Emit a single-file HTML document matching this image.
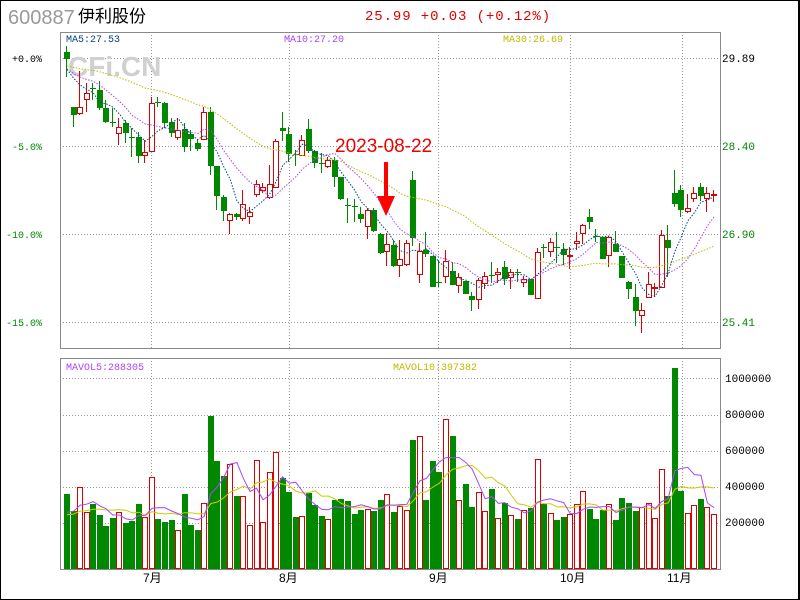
<!DOCTYPE html>
<html><head><meta charset="utf-8"><style>
html,body{margin:0;padding:0;background:#fff}
#w{position:relative;width:800px;height:600px;overflow:hidden;box-sizing:border-box;border:1px solid #000;border-width:1px 2px 1px 1px}
svg{position:absolute;left:-1px;top:-1px}
text{font-family:"Liberation Mono","DejaVu Sans Mono",monospace}
</style></head><body><div id="w"><svg id="s" width="800" height="600" xmlns="http://www.w3.org/2000/svg"></svg></div>
<script>
var C=[
['G',52,59,46,77],['G',107,115,107,127],['R',107,113,71,115],['R',93,99,83,112],['G',88,89,83,100],
['G',90,108,81,110],['G',108,122,100,123],['G',122,123,108,127],['R',127,133,118,145],['G',123,133,120,143],
['G',137,138,128,157],['G',137,156,132,163],['R',152,155,140,163],['R',103,151,97,152],['G',102,103,97,107],
['G',103,123,102,128],['G',122,133,118,137],['R',130,137,118,140],['G',129,147,123,152],['G',134,139,130,151],
['G',143,149,140,151],['R',112,139,107,140],['G',112,166,107,175],['G',166,196,166,210],['G',197,211,195,221],
['R',214,220,213,234],['G',214,217,213,220],['R',204,218,190,221],['R',212,216,207,224],['R',184,194,180,197],
['R',187,190,183,193],['R',184,197,165,199],['R',141,187,139,188],['G',128,131,112,141],['G',134,154,127,162],
['G',154,155,150,166],['R',140,155,135,156],['G',129,151,119,153],['G',151,163,150,168],['G',163,164,153,173],
['R',160,166,157,168],['G',160,177,157,187],['G',177,199,177,200],['G',205,206,198,223],['G',206,207,199,222],
['G',214,219,207,223],['R',210,226,208,239],['G',210,231,208,232],['G',234,253,233,254],['R',244,251,233,266],
['G',245,266,240,267],['R',259,265,240,277],['R',243,264,240,266],['G',180,238,171,246],['R',251,274,243,283],
['G',250,254,232,257],['G',256,287,256,287],['G',282,283,260,287],['R',261,276,250,283],['G',271,285,262,285],
['R',277,285,273,293],['G',281,294,281,294],['G',296,300,292,311],['R',280,299,278,309],['R',276,283,272,289],
['G',275,276,262,283],['R',272,274,268,283],['G',267,279,261,285],['R',272,277,269,289],['G',272,273,269,282],
['R',279,282,276,287],['G',279,295,279,295],['R',252,298,248,298],['G',247,248,244,258],['R',242,251,238,257],
['G',247,248,232,263],['G',249,255,243,265],['R',255,256,247,269],['R',241,243,232,250],['R',225,233,224,244],
['G',217,222,209,229],['G',236,237,229,242],['G',237,259,237,259],['R',237,255,236,267],['G',244,252,231,252],
['G',256,278,256,278],['G',282,289,281,299],['G',297,311,284,326],['R',310,315,303,333],['R',284,297,272,298],
['R',287,288,283,297],['R',235,287,230,287],['G',240,248,225,277],['G',193,204,170,207],['G',190,210,185,217],
['R',208,211,194,213],['R',193,198,187,202],['G',187,196,183,201],['R',193,198,187,212],['R',194,195,190,202]];
var V=[494,511,487,512,504,515,526,518,512,523,521,504,517,477,519,522,520,530,494,525,530,503,416,461,476,464,496,496,525,460,522,472,452,478,492,517,516,493,505,516,519,500,499,501,514,510,509,511,500,494,512,506,510,440,436,500,461,472,419,436,500,484,507,492,511,489,518,503,515,519,510,508,459,504,513,520,517,514,504,491,509,519,510,504,520,498,503,511,507,503,518,469,496,368,491,513,505,499,507,514];
var s='';
function L(x1,y1,x2,y2,c,d){s+='<line x1="'+x1+'" y1="'+y1+'" x2="'+x2+'" y2="'+y2+'" stroke="'+c+'" stroke-width="1"'+(d?' stroke-dasharray="1,2"':'')+'/>';}
function T(x,y,t,c,sz,ex){s+='<text x="'+x+'" y="'+y+'" fill="'+c+'" font-size="'+sz+'" '+(ex||'')+'>'+t+'</text>';}
[58,146,234,322].forEach(function(y){L(60,y+.5,720,y+.5,'#999',1)});
[378,415,451,487,523].forEach(function(y){L(60,y+.5,720,y+.5,'#999',1)});
[151,289,438,570,682].forEach(function(x){L(x+.5,32,x+.5,348,'#999',1);L(x+.5,358,x+.5,569,'#999',1)});
s+='<rect x="60.5" y="32.5" width="660" height="316" fill="none" stroke="#888"/>';
s+='<rect x="60.5" y="358.5" width="660" height="211" fill="none" stroke="#888"/>';
s+='<text x="68" y="76" fill="#d0d0d0" font-size="28" font-weight="bold" style="font-family:\'Liberation Sans\',sans-serif">CFi.CN</text>';
function X(i){return 64+i*6.535;}
var closes=[],vols=[];
C.forEach(function(c,i){var x=Math.round(X(i)),col=c[0]=='R'?'#d00':'#080';var cx=x+2.5;
 L(cx,c[3],cx,c[4],col);
 var h=Math.max(1,c[2]-c[1]);
 if(c[0]=='R')s+='<rect x="'+(x+.5)+'" y="'+(c[1]+.5)+'" width="5" height="'+h+'" fill="#fff" stroke="#d00"/>';
 else s+='<rect x="'+x+'" y="'+c[1]+'" width="6" height="'+h+'" fill="#080"/>';
 closes.push(c[0]=='R'?c[1]:c[2]);
 var vt=V[i];
 if(c[0]=='R')s+='<rect x="'+(x+.5)+'" y="'+(vt+.5)+'" width="5" height="'+(569-vt-1)+'" fill="#fff" stroke="#d00"/>';
 else s+='<rect x="'+x+'" y="'+vt+'" width="6" height="'+(569-vt)+'" fill="#080"/>';
 vols.push(569-vt);
});
function ma(a,n,pre){var r=[];for(var i=0;i<a.length;i++){var sm=0,k=0;for(var j=i;j>i-n;j--){sm+=(j>=0?a[j]:pre);k++;}r.push(sm/k);}return r;}
function pl(a,c,dash,st){var p=[];for(var i=st;i<a.length;i++)p.push((X(i)+3).toFixed(1)+','+a[i].toFixed(1));s+='<polyline points="'+p.join(' ')+'" fill="none" stroke="'+c+'" stroke-width="1"'+(dash?' stroke-dasharray="1.5,1.5"':'')+'/>';}
pl(ma(closes,30,66),'#bb0',1,0);
pl(ma(closes,10,70),'#a4f',1,0);
pl(ma(closes,5,72),'#048',1,0);
pl(ma(vols,10,52).map(function(v){return 569-v}),'#cc0',0,0);
pl(ma(vols,5,52).map(function(v){return 569-v}),'#a4f',0,0);
s+='<text x="8" y="24" fill="#999" font-size="20" style="font-family:\'Liberation Sans\',sans-serif">600887</text>';
s+='<text x="78" y="22" fill="#000" font-size="17" style="font-family:\'Liberation Sans\',\'Noto Sans CJK SC\',sans-serif">伊利股份</text>';
T(365,20,'25.99 +0.03 (+0.12%)','#d00',14,'letter-spacing="0.9"');
T(66,42,'MA5:27.53','#048',10);T(284,42,'MA10:27.20','#a4f',10);T(503,42,'MA30:26.69','#bb0',10);
T(66,370,'MAVOL5:288305','#a4f',10);T(393,370,'MAVOL10:397382','#bb0',10);
T(12,62,'+0.0%','#000',10);T(12,150,'-5.0%','#080',10);T(6,238,'-10.0%','#080',10);T(6,326,'-15.0%','#080',10);
T(722,62,'29.89','#000',11);T(722,150,'28.40','#080',11);T(722,238,'26.90','#080',11);T(722,326,'25.41','#080',11);
[['1000000',382],['800000',418],['600000',454],['400000',490],['200000',526]].forEach(function(a){T(725,a[1],a[0],'#000',11)});
[['7月',143],['8月',279],['9月',429],['10月',560],['11月',667]].forEach(function(a){s+='<text x="'+a[1]+'" y="582" fill="#000" font-size="12" style="font-family:\'Liberation Sans\',\'Noto Sans CJK SC\',sans-serif">'+a[0]+'</text>'});
s+='<text x="335" y="152" fill="#e00" font-size="19" style="font-family:\'Liberation Sans\',sans-serif">2023-08-22</text>';
s+='<rect x="384" y="162" width="4" height="38" fill="#f00"/><polygon points="377,196 395,196 386,216" fill="#f00"/>';
document.getElementById('s').innerHTML=s;
</script></body></html>
